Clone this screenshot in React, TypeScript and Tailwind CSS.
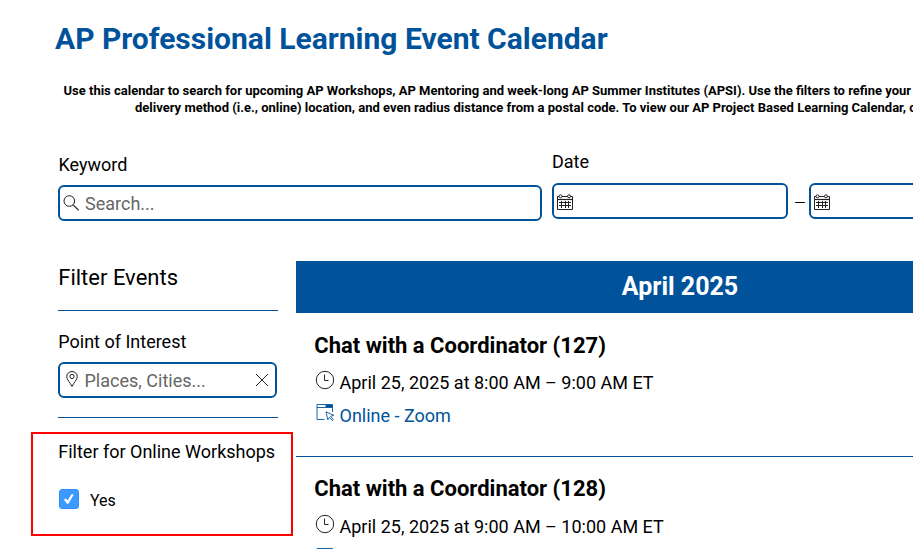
import type { ReactNode } from "react";

type EventItem = {
  id: number;
  title: string;
  time: string;
  location: string;
};

const events: EventItem[] = [
  {
    id: 127,
    title: "Chat with a Coordinator (127)",
    time: "April 25, 2025 at 8:00 AM – 9:00 AM ET",
    location: "Online - Zoom",
  },
  {
    id: 128,
    title: "Chat with a Coordinator (128)",
    time: "April 25, 2025 at 9:00 AM – 10:00 AM ET",
    location: "Online - Zoom",
  },
];

function SearchIcon() {
  return (
    <svg width="16" height="16" viewBox="0 0 16 16" fill="none" stroke="#222" strokeWidth="1">
      <circle cx="6.3" cy="6" r="5.3" />
      <path d="M10.1 9.8l5.6 5.5" strokeWidth="1.1" />
    </svg>
  );
}

function CalendarIcon() {
  return (
    <svg width="16" height="16" viewBox="0 0 16 16" fill="none" stroke="#222" strokeWidth="1">
      <path d="M.5 2.5h15v13H.5z" />
      <path d="M.5 5.5h15" strokeWidth="1.2" />
      <path d="M2 8.5h12M2 11.5h12M4.5 7v7M8.500 7v7M11.500 7v7" />
      <circle cx="3.5" cy="2.3" r="1.5" fill="#fff" />
      <circle cx="12" cy="2.3" r="1.5" fill="#fff" />
    </svg>
  );
}

function PinIcon() {
  return (
    <svg width="12" height="16" viewBox="0 0 12 16" fill="none" stroke="#222" strokeWidth="1">
      <path d="M6 15.4C4.2 11.6.7 8.7.7 5.6a5.3 5.1 0 0 1 10.6 0C11.3 8.7 7.8 11.6 6 15.4z" />
      <circle cx="6" cy="5.5" r="2.1" />
    </svg>
  );
}

function CloseIcon() {
  return (
    <svg width="14" height="14" viewBox="0 0 14 14" fill="none" stroke="#222" strokeWidth="1">
      <path d="M1 1l12 12M13 1L1 13" />
    </svg>
  );
}

function ClockIcon() {
  return (
    <svg width="20" height="20" viewBox="0 0 20 20" fill="none" stroke="#222" strokeWidth="1">
      <circle cx="10" cy="10" r="8.7" />
      <path d="M9.5 4.5v6h4" />
    </svg>
  );
}

function OnlineIcon() {
  return (
    <svg width="20" height="20" viewBox="0 0 20 20" fill="none" stroke="#00539b" strokeWidth=".9">
      <path d="M9.5 16.5H2v-15h15.5V9M2 4.5h15.5" />
      <path d="M10.5 3h7" strokeWidth="2.2" />
      <path d="M11 8.8l7.8 3.5-3.2 1 2.7 3.3-1.2 1-2.7-3.3-1.6 2.5z" />
    </svg>
  );
}

function Field({ className, children }: { className: string; children?: ReactNode }) {
  return (
    <div
      className={`flex h-9 items-center rounded-md border-2 border-[#00539b] text-[18px] text-[#666] ${className}`}
    >
      {children}
    </div>
  );
}

function EventCard({ event }: { event: EventItem }) {
  return (
    <article className="group h-36 border-b border-[#00539b] pt-[17px] pl-[18.25px]">
      <h3 className="text-[22px] leading-[30px] font-bold group-first-of-type:pt-px">
        {event.title}
      </h3>
      <div className="mt-1 flex h-9 items-center gap-1 pl-[0.75px] text-[18px] group-first-of-type:mt-[3px]">
        <span className="-mt-1">
          <ClockIcon />
        </span>
        <span className="pl-[0.5px]">{event.time}</span>
      </div>
      <div className="flex h-[30px] items-center gap-1 pl-[0.75px] text-[18px] text-[#00539b]">
        <span className="-mt-1">
          <OnlineIcon />
        </span>
        <span className="pl-[0.5px]">{event.location}</span>
      </div>
    </article>
  );
}

export default function App() {
  return (
    <div className="h-[549px] w-full overflow-hidden bg-white font-['Roboto',sans-serif] text-black">
      <div className="w-[1064px]">
        <h1 className="pt-[19px] pl-[55px] text-[30px] leading-10 font-bold text-[#00539b]">
          AP Professional Learning Event Calendar
        </h1>
        <div className="mt-[23px] text-[13px] leading-[17px] font-bold whitespace-nowrap">
          <p className="pl-[63.5px]">
            Use this calendar to search for upcoming AP Workshops, AP Mentoring and week-long AP
            Summer Institutes (APSI). Use the filters to refine your
          </p>
          <p className="pl-[135px]">
            delivery method (i.e., online) location, and even radius distance from a postal code. To
            view our AP Project Based Learning Calendar, click
          </p>
        </div>

        <div className="mt-[31px] flex pl-[58px] text-[18px]">
          <div className="w-[484px] pt-[3px]">
            <label className="block h-[35px] pl-[0.5px] leading-[30px]">Keyword</label>
            <Field className="gap-1.5 pl-[3px]">
              <SearchIcon />
              <span>Search...</span>
            </Field>
          </div>
          <div className="ml-2.5">
            <label className="block h-9 leading-[30px]">Date</label>
            <div className="flex h-9 items-center">
              <Field className="w-[236px] pt-0.5 pl-[3px]">
                <CalendarIcon />
              </Field>
              <span className="w-[21px] pt-[3px] pl-[3px] text-center text-[20px] leading-9 font-light">
                –
              </span>
              <Field className="w-[236px] pt-0.5 pl-[3px]">
                <CalendarIcon />
              </Field>
            </div>
          </div>
        </div>

        <div className="mt-10 flex">
          <aside className="w-[296px] shrink-0 text-[18px]">
            <div className="mx-[18px] ml-[58px]">
              <h2 className="h-[50px] border-b border-[#00539b] pl-[0.25px] text-[22px] leading-[34px]">
                Filter Events
              </h2>
              <div className="h-[107px] border-b border-[#00539b] pt-4">
                <label className="block h-[35px] pl-[0.25px] leading-[30px]">
                  Point of Interest
                </label>
                <Field className="mr-px justify-between pr-1.5 pl-[5.5px]">
                  <span className="flex items-center gap-[7px]">
                    <span className="-mt-0.5">
                      <PinIcon />
                    </span>
                    Places, Cities...
                  </span>
                  <CloseIcon />
                </Field>
              </div>
            </div>
            <div className="mt-3.5 ml-[31px] h-[104px] w-[262px] border-2 border-[#ff0000] pt-[3px] pl-[25.25px]">
              <div className="leading-[30px] whitespace-nowrap">Filter for Online Workshops</div>
              <div className="mt-[22px] flex h-5 items-center pl-[0.75px] text-[16px]">
                <span className="flex size-5 items-center justify-center rounded-[3px] border border-[#338fff] bg-[#3d9aff]">
                  <svg width="12" height="12" viewBox="0 0 12 12" fill="#fff">
                    <path d="M1 6.8l1.7-1.2 1.9 2L8.7 1l2 .8L5.3 10.8H4z" />
                  </svg>
                </span>
                <span className="mt-[3px] ml-[11px]">Yes</span>
              </div>
            </div>
          </aside>
          <main className="flex-1">
            <h2 className="h-[52px] bg-[#00539b] text-center text-[25px] leading-[52px] font-bold text-white">
              April 2025
            </h2>
            {events.map((event) => (
              <EventCard key={event.id} event={event} />
            ))}
          </main>
        </div>
      </div>
    </div>
  );
}
